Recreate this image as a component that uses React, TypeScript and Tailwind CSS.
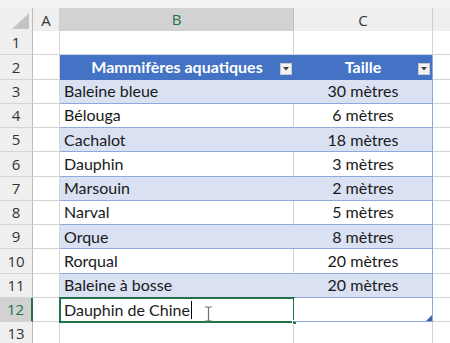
import React from "react";

const rows: { name: string; size: string }[] = [
  { name: "Baleine bleue", size: "30 mètres" },
  { name: "Bélouga", size: "6 mètres" },
  { name: "Cachalot", size: "18 mètres" },
  { name: "Dauphin", size: "3 mètres" },
  { name: "Marsouin", size: "2 mètres" },
  { name: "Narval", size: "5 mètres" },
  { name: "Orque", size: "8 mètres" },
  { name: "Rorqual", size: "20 mètres" },
  { name: "Baleine à bosse", size: "20 mètres" },
];

const cols = "grid grid-cols-[33px_27px_234px_139px_1fr]";
const rowH = "h-[24.25px]";
const headFont = { fontFamily: '"Open Sans", "Noto Sans", sans-serif' };
const cellFont = { fontFamily: 'Lato, "Liberation Sans", sans-serif' };

function FilterButton() {
  return (
    <div className="w-[12px] h-[12px] bg-[#f3f3f3] border border-[#c8c8c8] flex items-center justify-center">
      <svg width="6" height="4" viewBox="0 0 6 4">
        <path d="M0 0 H6 L3 3.5 Z" fill="#404040" />
      </svg>
    </div>
  );
}

function RowHead({ n, active }: { n: number; active?: boolean }) {
  return (
    <div
      className={`${rowH} flex items-center justify-center text-[15px] border-b border-[#d4d4d4] ${
        active
          ? "bg-[#d2d2d2] text-[#217346] border-r-2 border-r-[#217346]"
          : "bg-[#efefef] text-[#333] border-r border-r-[#bdbdbd]"
      }`}
      style={headFont}
    >
      {n}
    </div>
  );
}

function Empty({ extra = "" }: { extra?: string }) {
  return <div className={`${rowH} border-r border-b border-[#d4d4d4] bg-white ${extra}`} />;
}

export default function App() {
  return (
    <div className="w-[450px] h-[343px] overflow-hidden bg-white text-[#1a1a1a]" style={cellFont}>
      {/* top strip */}
      <div className="h-[8px] bg-[#f3f3f3]" />

      {/* column headers */}
      <div className={`${cols} h-[23px]`} style={headFont}>
        <div className="bg-[#efefef] border-r border-b border-[#bdbdbd] flex items-end justify-end pr-[3px] pb-[3px]">
          <svg width="17" height="16" viewBox="0 0 17 16">
            <path d="M17 0 V16 H0 Z" fill="#c4c4c4" />
          </svg>
        </div>
        <div className="bg-[#efefef] border-r border-[#d0d0d0] border-b border-b-[#bdbdbd] flex items-center justify-center text-[15px] text-[#333]">
          A
        </div>
        <div className="bg-[#d2d2d2] border-r border-[#c0c0c0] border-b-2 border-b-[#217346] flex items-center justify-center text-[15px] text-[#217346]">
          B
        </div>
        <div className="bg-[#efefef] border-r border-[#d0d0d0] border-b border-b-[#bdbdbd] flex items-center justify-center text-[15px] text-[#333]">
          C
        </div>
        <div className="bg-[#efefef] border-b border-[#bdbdbd]" />
      </div>

      {/* row 1 */}
      <div className={cols}>
        <RowHead n={1} />
        <Empty />
        <Empty />
        <Empty />
        <Empty extra="border-r-0" />
      </div>

      {/* row 2 : table header */}
      <div className={cols}>
        <RowHead n={2} />
        <Empty />
        <div className={`${rowH} bg-[#4472c4] relative flex items-center justify-center text-white font-bold text-[16px]`}>
          Mammifères aquatiques
          <div className="absolute right-[2px] top-[8px]">
            <FilterButton />
          </div>
        </div>
        <div className={`${rowH} bg-[#4472c4] relative flex items-center justify-center text-white font-bold text-[16px] border-r border-[#8ea9db]`}>
          Taille
          <div className="absolute right-[2px] top-[8px]">
            <FilterButton />
          </div>
        </div>
        <Empty extra="border-r-0" />
      </div>

      {/* rows 3-11 */}
      {rows.map((r, i) => {
        const band = i % 2 === 0 ? "bg-[#d9e1f2]" : "bg-white";
        return (
          <div key={r.name} className={cols}>
            <RowHead n={i + 3} />
            <Empty />
            <div className={`${rowH} ${band} border-b border-[#8ea9db] flex items-center pl-[4px] text-[16px] ${i % 2 === 0 ? "" : "border-r border-r-[#d4d4d4]"}`}>
              {r.name}
            </div>
            <div className={`${rowH} ${band} border-b border-[#8ea9db] border-r border-r-[#8ea9db] flex items-center justify-center text-[16px]`}>
              {r.size}
            </div>
            <Empty extra="border-r-0" />
          </div>
        );
      })}

      {/* row 12 : editing */}
      <div className={cols}>
        <RowHead n={12} active />
        <Empty />
        <div className={`${rowH} relative bg-white flex items-center pl-[4px] text-[16px]`}>
          <span>Dauphin de Chine</span>
          <span className="inline-block w-[1px] h-[18px] bg-black ml-[1px]" />
          <div className="absolute -left-[1px] -top-[1px] -right-[1px] -bottom-[1px] border-2 border-[#217346] pointer-events-none" />
          <div className="absolute -right-[3px] -bottom-[3px] w-[5px] h-[5px] bg-[#217346] border border-white" />
          <svg className="absolute left-[144px] top-[8px]" width="9" height="16" viewBox="0 0 9 16">
            <path d="M1 1 H3.5 Q4.5 1 4.5 2 V14 Q4.5 15 3.5 15 H1 M8 1 H5.5 Q4.5 1 4.5 2 M8 15 H5.5 Q4.5 15 4.5 14" fill="none" stroke="#707070" strokeWidth="1.2" />
          </svg>
        </div>
        <div className={`${rowH} relative bg-white border-b border-[#8ea9db] border-r border-r-[#8ea9db]`}>
          <svg className="absolute right-[0px] bottom-[0px]" width="6" height="6" viewBox="0 0 6 6">
            <path d="M6 0 V6 H0 Z" fill="#3f5fb0" />
          </svg>
        </div>
        <Empty extra="border-r-0" />
      </div>

      {/* row 13 */}
      <div className={cols}>
        <RowHead n={13} />
        <Empty />
        <Empty />
        <Empty />
        <Empty extra="border-r-0" />
      </div>
    </div>
  );
}
